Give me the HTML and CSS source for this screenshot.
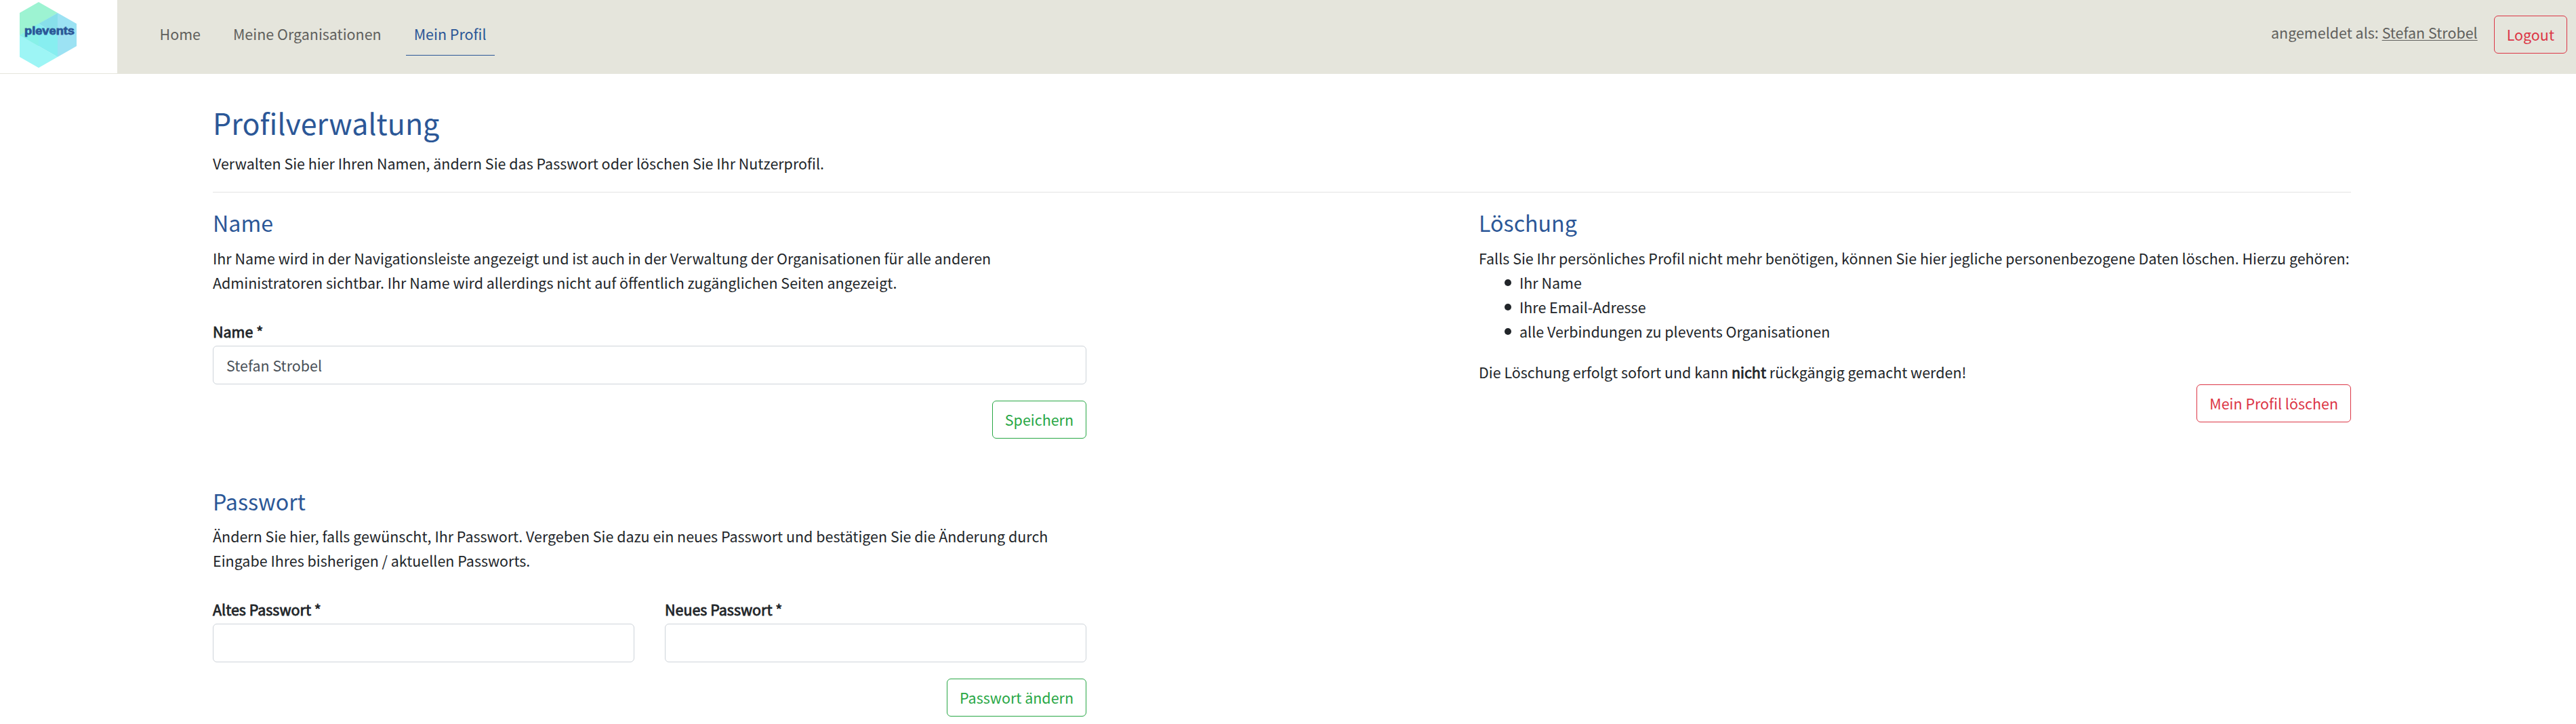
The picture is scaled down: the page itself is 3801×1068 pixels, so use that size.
FILE: index.html
```html
<!DOCTYPE html>
<html lang="de">
<head>
<meta charset="utf-8">
<title>plevents – Mein Profil</title>
<link rel="stylesheet" href="styles.css">
</head>
<body>
<header class="navbar">
  <a class="brand">
    <svg class="logo" width="86" height="100" viewBox="28 2 86 100">
      <polygon points="29,19 57,3 85,19 29,52" fill="#9df3d2"/>
      <polygon points="85,19 113,35 113,68 85,84" fill="#9ce2f3"/>
      <polygon points="29,52 85,84 57,100 29,84" fill="#9df5f5"/>
      <polygon points="29,52 57,35 85,52 85,84" fill="#87eef0"/>
      <polygon points="57,35 85,19 85,52" fill="#87dfea"/>
      <polygon points="29,52 57,35 57,68" fill="#87f1e8"/>
      <text class="logo-text" x="36" y="50.5" textLength="74" lengthAdjust="spacingAndGlyphs">plevents</text>
    </svg>
  </a>
  <nav class="menu">
    <a class="menu-link">Home</a>
    <a class="menu-link">Meine Organisationen</a>
    <a class="menu-link active">Mein Profil</a>
  </nav>
  <div class="account">
    <span class="signed-in">angemeldet als: <a class="user">Stefan Strobel</a></span>
    <button class="btn danger">Logout</button>
  </div>
</header>
<main class="page">
  <h1>Profilverwaltung</h1>
  <p>Verwalten Sie hier Ihren Namen, ändern Sie das Passwort oder löschen Sie Ihr Nutzerprofil.</p>
  <hr>
  <div class="columns">
    <div class="left">
      <section class="block">
        <h2>Name</h2>
        <p>Ihr Name wird in der Navigationsleiste angezeigt und ist auch in der Verwaltung der Organisationen für alle anderen<br>Administratoren sichtbar. Ihr Name wird allerdings nicht auf öffentlich zugänglichen Seiten angezeigt.</p>
        <div class="fields">
          <label class="field"><span class="strong">Name *</span><input type="text" value="Stefan Strobel"></label>
        </div>
        <div class="actions"><button class="btn success">Speichern</button></div>
      </section>
      <section class="block">
        <h2>Passwort</h2>
        <p>Ändern Sie hier, falls gewünscht, Ihr Passwort. Vergeben Sie dazu ein neues Passwort und bestätigen Sie die Änderung durch<br>Eingabe Ihres bisherigen / aktuellen Passworts.</p>
        <div class="fields">
          <label class="field"><span class="strong">Altes Passwort *</span><input type="password"></label>
          <label class="field"><span class="strong">Neues Passwort *</span><input type="password"></label>
        </div>
        <div class="actions"><button class="btn success">Passwort ändern</button></div>
      </section>
    </div>
    <section class="right">
      <h2>Löschung</h2>
      <p>Falls Sie Ihr persönliches Profil nicht mehr benötigen, können Sie hier jegliche personenbezogene Daten löschen. Hierzu gehören:</p>
      <ul class="list">
        <li>Ihr Name</li>
        <li>Ihre Email-Adresse</li>
        <li>alle Verbindungen zu plevents Organisationen</li>
      </ul>
      <p>Die Löschung erfolgt sofort und kann <span class="strong">nicht</span> rückgängig gemacht werden!</p>
      <div class="actions tight"><button class="btn danger">Mein Profil löschen</button></div>
    </section>
  </div>
</main>
</body>
</html>
```
FILE: styles.css
```css
* { box-sizing: border-box; }
body {
  margin: 0;
  background: #fff;
  color: #212529;
  font-family: "Noto Sans CJK SC", "Noto Sans", sans-serif;
  font-size: 21.47px;
  line-height: 36px;
}
h1, h2, p, ul { margin: 0; padding: 0; }
h1, h2 { color: #2b5797; font-weight: 400; }
h1 { font-size: 43px; line-height: 58px; margin-bottom: 14px; }
h2 { font-size: 32.2px; line-height: 43px; margin-bottom: 13px; }
button, input { font: inherit; }
.strong { -webkit-text-stroke: 0.8px currentColor; }

.navbar {
  display: flex;
  height: 109px;
  border-bottom: 1px solid #e5e5dc;
  background: #e5e5dc;
}
.brand { width: 173px; padding: 2px 0 0 28px; background: #fff; }
.logo { display: block; }
.logo-text {
  font-family: "Liberation Sans", Arial, sans-serif;
  font-size: 16px;
  font-weight: 700;
  fill: #2b5797;
  stroke: #2b5797;
  stroke-width: 0.8px;
}
.menu { display: flex; gap: 24px; padding: 20px 0 26px 50.5px; }
.menu-link { padding: 12px; color: #60605c; border-bottom: 1px solid transparent; white-space: nowrap; }
.active { color: #2b5797; border-bottom-color: #2b5797; }
.account { display: flex; align-items: flex-start; gap: 24px; margin-left: auto; padding: 23px 13px 0 0; color: #60605c; }
.signed-in { padding-top: 7px; }
.user { text-decoration: underline; text-decoration-thickness: 1px; text-underline-offset: 2px; }

.btn {
  display: block;
  height: 56px;
  padding: 9px 18px;
  border: 1px solid;
  border-radius: 6px;
  background: transparent;
  line-height: 36px;
  white-space: nowrap;
}
.danger { color: #dc3545; }
.success { color: #28a745; }

.page { width: 3155px; margin: 42px 0 0 314px; }
hr { margin: 24px 0 23px; border: 0; border-top: 1px solid #e3e3e3; }
.columns { display: flex; justify-content: space-between; align-items: flex-start; }
.left { width: 1289px; }
.right { width: 1287px; }
.right p { white-space: nowrap; }
.block + .block { margin-top: 71px; }
.block + .block h2 { margin-bottom: 12px; }
.fields { display: flex; gap: 45px; margin-top: 36px; }
.field { flex: 1; display: flex; flex-direction: column; gap: 3px; }
.field input {
  width: 100%;
  height: 57px;
  padding: 9px 19px;
  border: 1px solid #ced4da;
  border-radius: 6px;
  background: #fff;
  color: #495057;
}
.actions { display: flex; justify-content: flex-end; margin-top: 24px; }
.tight { margin-top: 0; }
.list { list-style: none; margin-bottom: 24px; }
.list li { display: flex; align-items: center; padding-left: 38px; }
.list li::before { content: ""; width: 10px; height: 10px; margin-right: 12px; border-radius: 50%; background: #212529; }
```
